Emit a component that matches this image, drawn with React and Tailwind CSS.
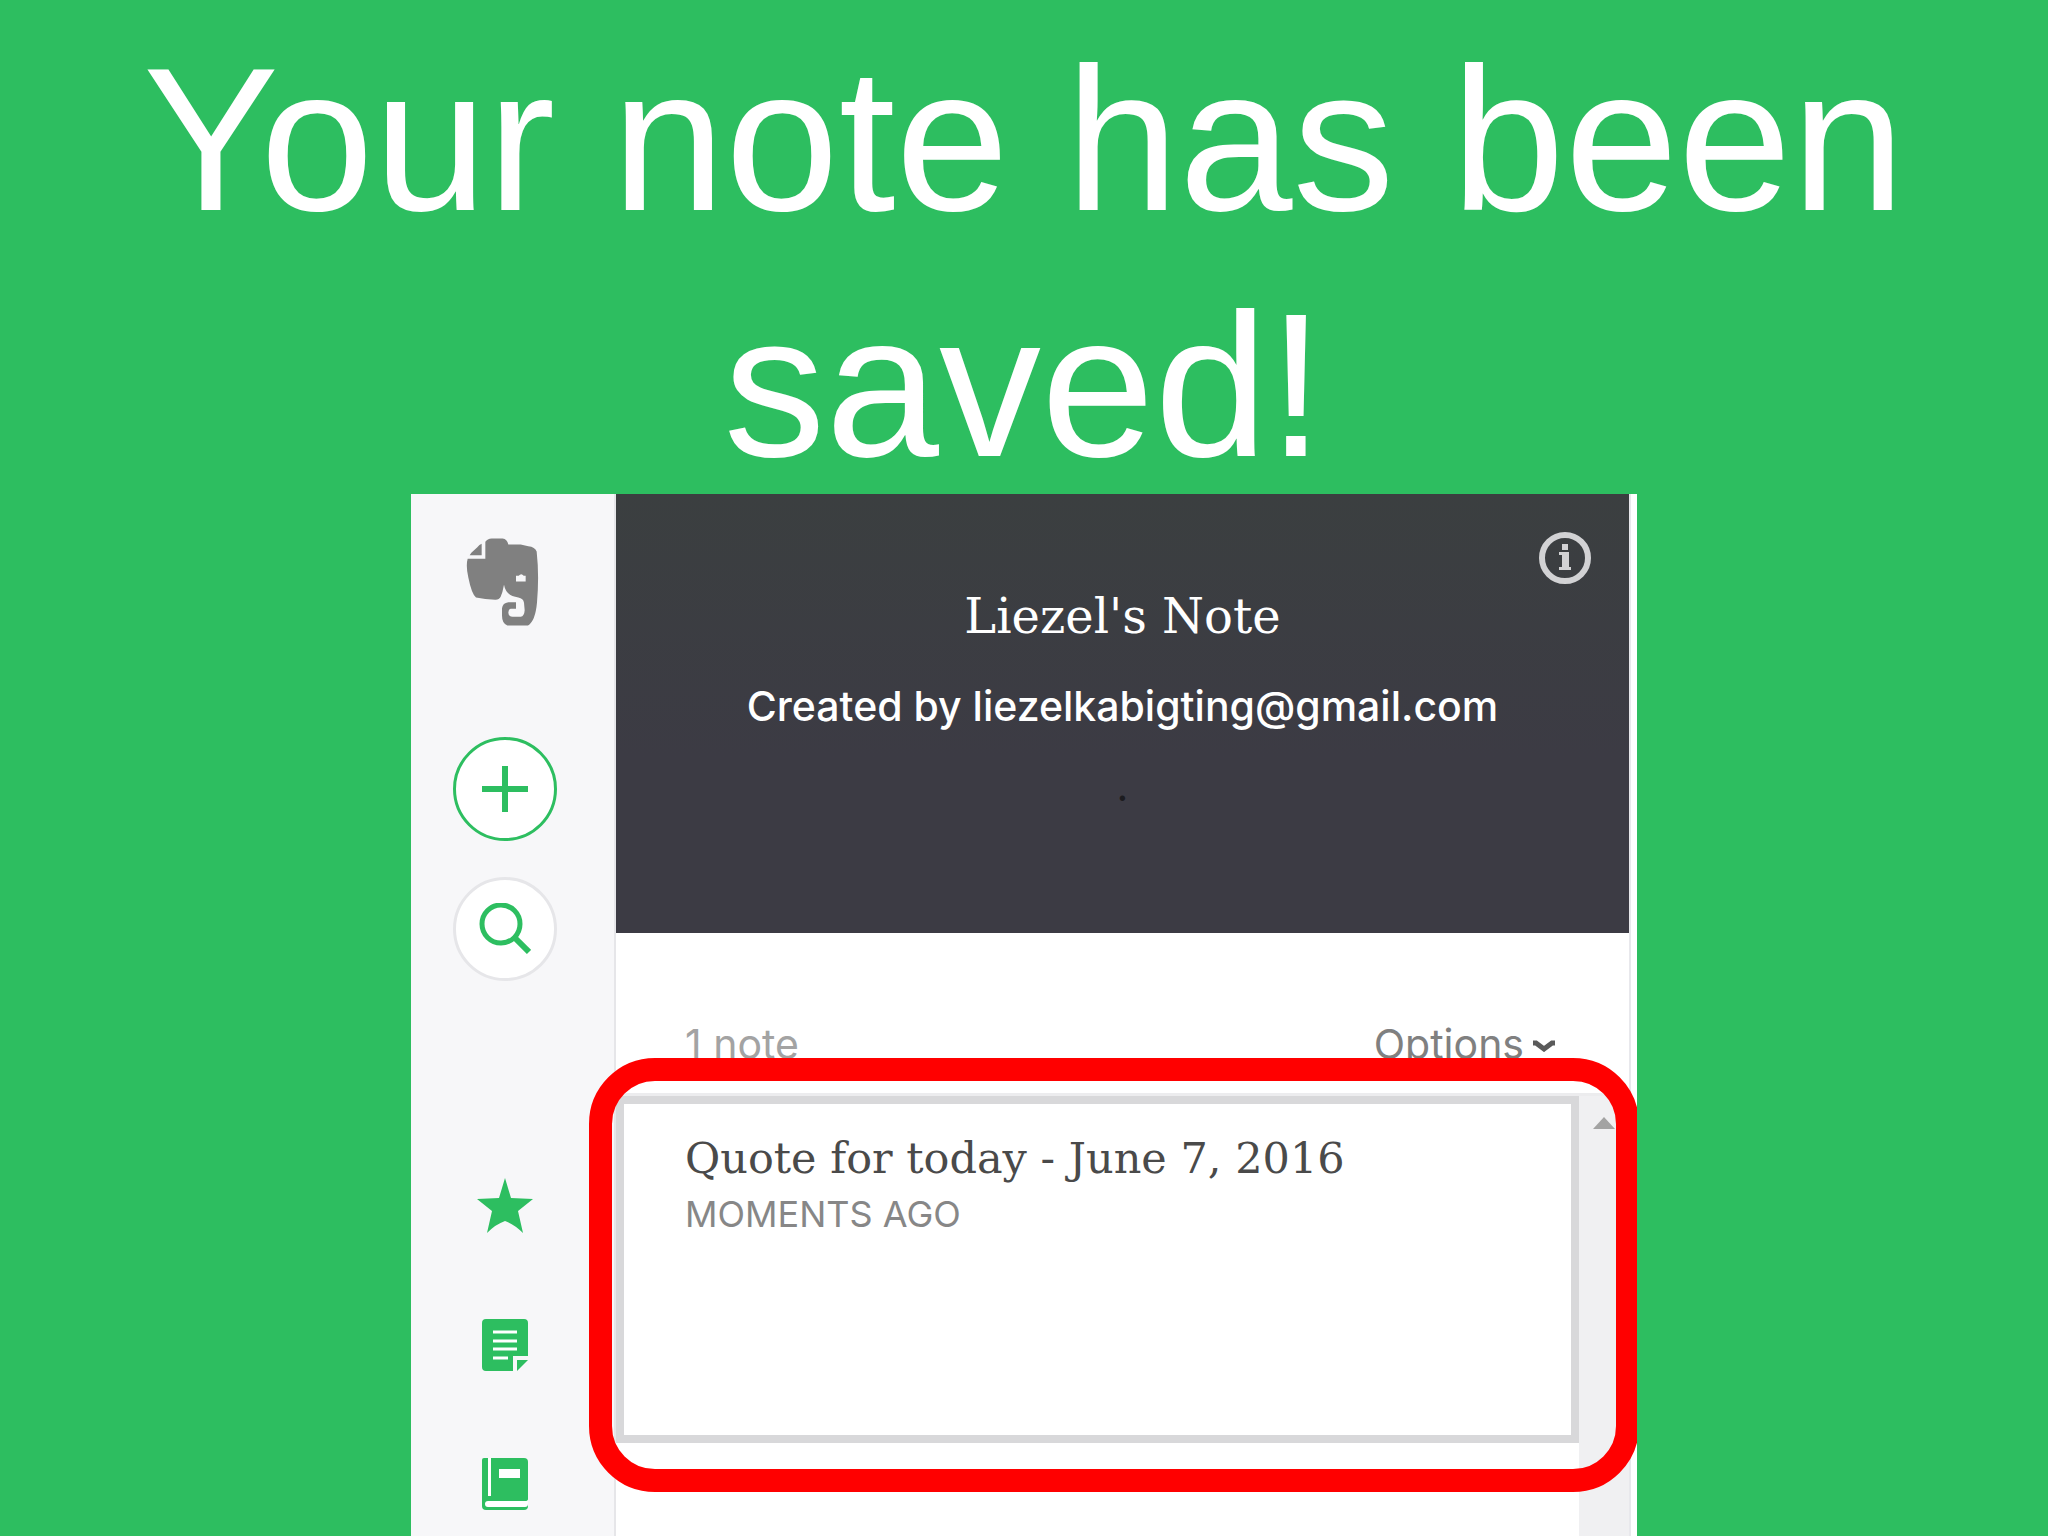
import React from 'react'

function ElephantLogo() {
  return (
    <svg viewBox="195 172 225 263" className="h-[88px] w-[75px]" fill="#808080" aria-hidden="true">
      <path d="M209 223 L245 223 L245 189 Q238 191 232 199 L214 216 Z" />
      <path d="M203 234 L256 234 L256 183 Q262 174 275 173 L308 173 Q321 175 325 191 L362 191 L385 196 Q405 198 410 212 Q418 285 411 365 Q406 421 384 434 L322 434 Q306 428 306 405 L306 382 Q308 366 325 364 L348 364 L348 384 L332 384 Q325 386 325 396 Q326 408 338 408 L362 408 Q373 405 374 388 L372 366 Q370 353 355 350 Q318 346 312 312 Q308 335 302 348 Q297 358 285 357 Q255 356 228 350 Q215 340 205 290 Q197 255 203 234 Z" />
      <path d="M348 285 L356 285 Q364 276 371 285 L377 285 L377 302 L348 302 Z" fill="#f7f7f9" />
    </svg>
  )
}

function StarIcon() {
  return (
    <svg viewBox="0 0 58 55" className="h-[55px] w-[58px]" fill="#2dbe60" aria-hidden="true">
      <path d="M29 0 L35 20 L57 21 L42 33 L47 55 Q38 46 29 43 Q20 46 11 55 L16 33 L1 21 L23 20 Z" />
    </svg>
  )
}

function NoteIcon() {
  return (
    <svg viewBox="0 0 46 52" className="h-[52px] w-[46px]" aria-hidden="true">
      <path d="M4 0 H42 Q46 0 46 4 V37 H31 V52 H4 Q0 52 0 48 V4 Q0 0 4 0 Z" fill="#2dbe60" />
      <path d="M35 41 H46 L35 52 Z" fill="#2dbe60" />
      <path d="M11 13 H35 M11 22 H35 M11 30 H35 M11 39 H26" stroke="#fff" strokeWidth="3" />
    </svg>
  )
}

function NotebookIcon() {
  return (
    <svg viewBox="0 0 46 52" className="h-[52px] w-[46px]" aria-hidden="true">
      <path d="M2 0 H42 Q46 0 46 4 V48 Q46 52 42 52 H4 Q0 52 0 48 V2 Q0 0 2 0 Z" fill="#2dbe60" />
      <path d="M6 0 H9 V38 H6 Z M17 11 H38 V20 H17 Z M4 43 H43 Q46 43 46 41 V46 Q46 49 43 49 H6 Q3 49 3 46 Q3 43 6 43 Z" fill="#fff" />
    </svg>
  )
}

function Sidebar() {
  return (
    <aside className="w-[205px] shrink-0 border-r-2 border-[#e6e6e9] bg-[#f7f7f9] pl-[42px] pt-11">
      <nav className="flex w-[104px] flex-col items-center">
        <a href="#home" aria-label="Home" className="ml-3 self-start">
          <ElephantLogo />
        </a>
        <button
          type="button"
          aria-label="New note"
          className="mt-[111px] flex h-[104px] w-[104px] items-center justify-center rounded-full border-3 border-[#2dbe60] bg-white"
        >
          <svg viewBox="0 0 46 46" className="h-[46px] w-[46px]" stroke="#2dbe60" strokeWidth="6">
            <path d="M23 0 V46 M0 23 H46" />
          </svg>
        </button>
        <button
          type="button"
          aria-label="Search"
          className="mt-9 flex h-[104px] w-[104px] items-center justify-center rounded-full border-3 border-[#e6e6e9] bg-white"
        >
          <svg viewBox="0 0 52 52" className="h-[52px] w-[52px]" fill="none" stroke="#2dbe60">
            <circle cx="22" cy="21" r="19" strokeWidth="5" />
            <path d="M35 34 L50 49" strokeWidth="6" />
          </svg>
        </button>
        <button type="button" aria-label="Shortcuts" className="mt-[197px]">
          <StarIcon />
        </button>
        <button type="button" aria-label="Notes" className="mt-[86px]">
          <NoteIcon />
        </button>
        <button type="button" aria-label="Notebooks" className="mt-[87px]">
          <NotebookIcon />
        </button>
      </nav>
    </aside>
  )
}

function NotebookHeader() {
  return (
    <header className="flex min-h-[439px] flex-col bg-linear-to-b from-[#3b3f40] to-[#3c3b44] to-60% pt-[38px] text-center text-white">
      <button type="button" aria-label="Notebook info" className="mr-[38px] self-end">
        <svg viewBox="0 0 52 52" className="h-[52px] w-[52px]" fill="#d2d2d4">
          <circle cx="26" cy="26" r="23" fill="none" stroke="#d2d2d4" strokeWidth="6" />
          <path d="M23 12 H29 V18 H23 Z M20 20 H30 V35 H32 V38 H20 V35 H23 V23 H20 Z" />
        </svg>
      </button>
      <h2 className="mt-0.5 font-['DejaVu_Serif',serif] text-[48px] leading-[60px]">Liezel's Note</h2>
      <p className="mt-[30px] font-['Inter',sans-serif] text-[41px] font-medium leading-[60px]">
        Created by liezelkabigting@gmail.com
      </p>
      <p className="mt-5 font-['Inter',sans-serif] text-[41px] leading-[60px] text-[#1c1c20]">.</p>
    </header>
  )
}

function NoteList() {
  return (
    <section className="relative flex flex-1 border-t-3 border-[#ececee]">
      <div className="flex-1">
        <a href="#note" className="block h-[347px] border-8 border-[#d8d8da] bg-white pl-[61px] pt-[26px]">
          <h3 className="font-['DejaVu_Serif',serif] text-[43px] leading-[56px] text-[#4a4a4a]">
            Quote for today - June 7, 2016
          </h3>
          <p className="mt-2 font-['Inter',sans-serif] text-[36px] leading-[40px] text-[#878787]">MOMENTS AGO</p>
        </a>
      </div>
      <div className="w-[50px] bg-[#f0f0f2] pl-3.5 pt-[21px]">
        <svg viewBox="0 0 22 12" className="h-3 w-[22px]" fill="#a3a3a3" aria-hidden="true">
          <path d="M11 0 L22 12 H0 Z" />
        </svg>
      </div>
      <div className="pointer-events-none absolute -left-[27px] -right-[10px] -top-[38px] h-[434px] rounded-[66px] border-[23px] border-[#ff0000]" />
    </section>
  )
}

export default function App() {
  return (
    <div className="flex min-h-screen flex-col items-center bg-[#2dbe60]">
      <h1 className="px-16 pt-4 text-center font-['Liberation_Sans',Arial,sans-serif] text-[204px] leading-[246px] text-white">
        Your note has been saved!
      </h1>
      <div className="relative -mt-3.5 flex w-full max-w-[1226px] flex-1 overflow-hidden bg-white pr-1.5">
        <Sidebar />
        <main className="flex min-w-0 flex-1 flex-col border-r-2 border-[#e8e8ec] bg-white">
          <NotebookHeader />
          <div className="flex items-center justify-between pb-[19px] pl-[69px] pr-[73px] pt-[81px] font-['Inter',sans-serif] text-[41px] leading-[60px]">
            <span className="text-[#a3a3a3]">1 note</span>
            <button type="button" className="flex items-center gap-2 text-[#808080]">
              Options
              <svg viewBox="0 0 24 12" className="mt-1 h-3 w-6" fill="none" stroke="#5a5a5a" strokeWidth="5" aria-hidden="true">
                <path d="M1 3 H4 L12 9 L20 3 H23" />
              </svg>
            </button>
          </div>
          <NoteList />
        </main>
      </div>
    </div>
  )
}
